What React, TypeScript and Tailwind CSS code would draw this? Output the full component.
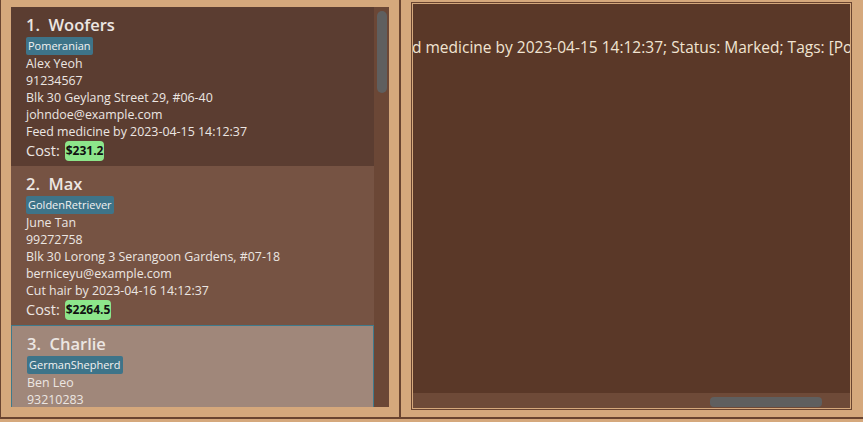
import React from "react";

type Pet = {
  idx: number;
  name: string;
  tag: string;
  owner: string;
  phone: string;
  address: string;
  email: string;
  activity: string;
  cost: string;
  bg: string;
  selected?: boolean;
};

const pets: Pet[] = [
  {
    idx: 1,
    name: "Woofers",
    tag: "Pomeranian",
    owner: "Alex Yeoh",
    phone: "91234567",
    address: "Blk 30 Geylang Street 29, #06-40",
    email: "johndoe@example.com",
    activity: "Feed medicine by 2023-04-15 14:12:37",
    cost: "$231.2",
    bg: "bg-[#5b3d31]",
  },
  {
    idx: 2,
    name: "Max",
    tag: "GoldenRetriever",
    owner: "June Tan",
    phone: "99272758",
    address: "Blk 30 Lorong 3 Serangoon Gardens, #07-18",
    email: "berniceyu@example.com",
    activity: "Cut hair by 2023-04-16 14:12:37",
    cost: "$2264.5",
    bg: "bg-[#765343]",
  },
  {
    idx: 3,
    name: "Charlie",
    tag: "GermanShepherd",
    owner: "Ben Leo",
    phone: "93210283",
    address: "Blk 11 Ang Mo Kio Street 74, #11-04",
    email: "charlotte@example.com",
    activity: "Walk by 2023-04-17 14:12:37",
    cost: "$120.0",
    bg: "bg-[#a0877a]",
    selected: true,
  },
];

function Card({ p }: { p: Pet }) {
  return (
    <div
      className={`${p.bg} shrink-0 h-[159px] pt-[6px] ${
        p.selected ? "border border-[#3f7a8c] pl-[15px]" : "pl-[15px]"
      }`}
    >
      <div className="h-[24px] leading-[24px] text-[16.5px] font-semibold text-[#ece6e2] whitespace-pre">
        {`${p.idx}.  ${p.name}`}
      </div>
      <div className="flex">
        <span className="bg-[#3e7489] text-[#f2f2f2] text-[11px] leading-[18px] h-[18px] px-[2px] rounded-[2px]">
          {p.tag}
        </span>
      </div>
      <div className="text-[12.4px] leading-[17px] text-[#ece6e2] whitespace-nowrap">
        <div>{p.owner}</div>
        <div>{p.phone}</div>
        <div>{p.address}</div>
        <div>{p.email}</div>
        <div>{p.activity}</div>
      </div>
      <div className="flex items-center h-[22px] gap-[5px] text-[#ece6e2]">
        <span className="text-[14.5px] leading-[20px]">Cost:</span>
        <span className="bg-[#8de68b] text-[#111] text-[12px] font-bold leading-[20px] h-[20px] px-[1px] rounded-[4px]">
          {p.cost}
        </span>
      </div>
    </div>
  );
}

export default function App() {
  return (
    <div
      className="w-[863px] h-[422px] bg-[#d5a87c] overflow-hidden flex flex-col"
      style={{ fontFamily: '"Open Sans", "Noto Sans", sans-serif' }}
    >
      <div className="flex h-[417px] border-l border-[#6a4430]">
        {/* left */}
        <div className="w-[398px] pl-[10px] pt-[7px] pr-[9px]">
          <div className="flex h-[400px] w-[378px]">
            <div className="flex-1 flex flex-col overflow-hidden">
              {pets.map((p) => (
                <Card key={p.idx} p={p} />
              ))}
            </div>
            <div className="w-[15px] bg-[#6b4736] pt-[4px] pl-[3px]">
              <div className="w-[10px] h-[82px] bg-[#5f5f5f] rounded-[5px]" />
            </div>
          </div>
        </div>
        {/* divider */}
        <div className="w-[2px] bg-[#6a4430]" />
        {/* right */}
        <div className="flex-1 pl-[10px] pt-[2px]">
          <div className="w-[441px] h-[408px] border border-[#6a4430] p-[1px]">
            <div className="h-full bg-[#5a3828] flex flex-col">
              <div className="flex-1 overflow-hidden pt-[33px]">
                <div className="whitespace-nowrap text-[15.5px] leading-[20px] text-[#f1e4d2] -ml-[1px]">
                  d medicine by 2023-04-15 14:12:37; Status: Marked; Tags: [Pomeranian]
                </div>
              </div>
              <div className="h-[15px] bg-[#6e4a38] pt-[4px] pl-[297px]">
                <div className="w-[112px] h-[10px] bg-[#5f5f5f] rounded-[4px]" />
              </div>
            </div>
          </div>
        </div>
      </div>
      <div className="h-[2px] bg-[#6a4430]" />
    </div>
  );
}
